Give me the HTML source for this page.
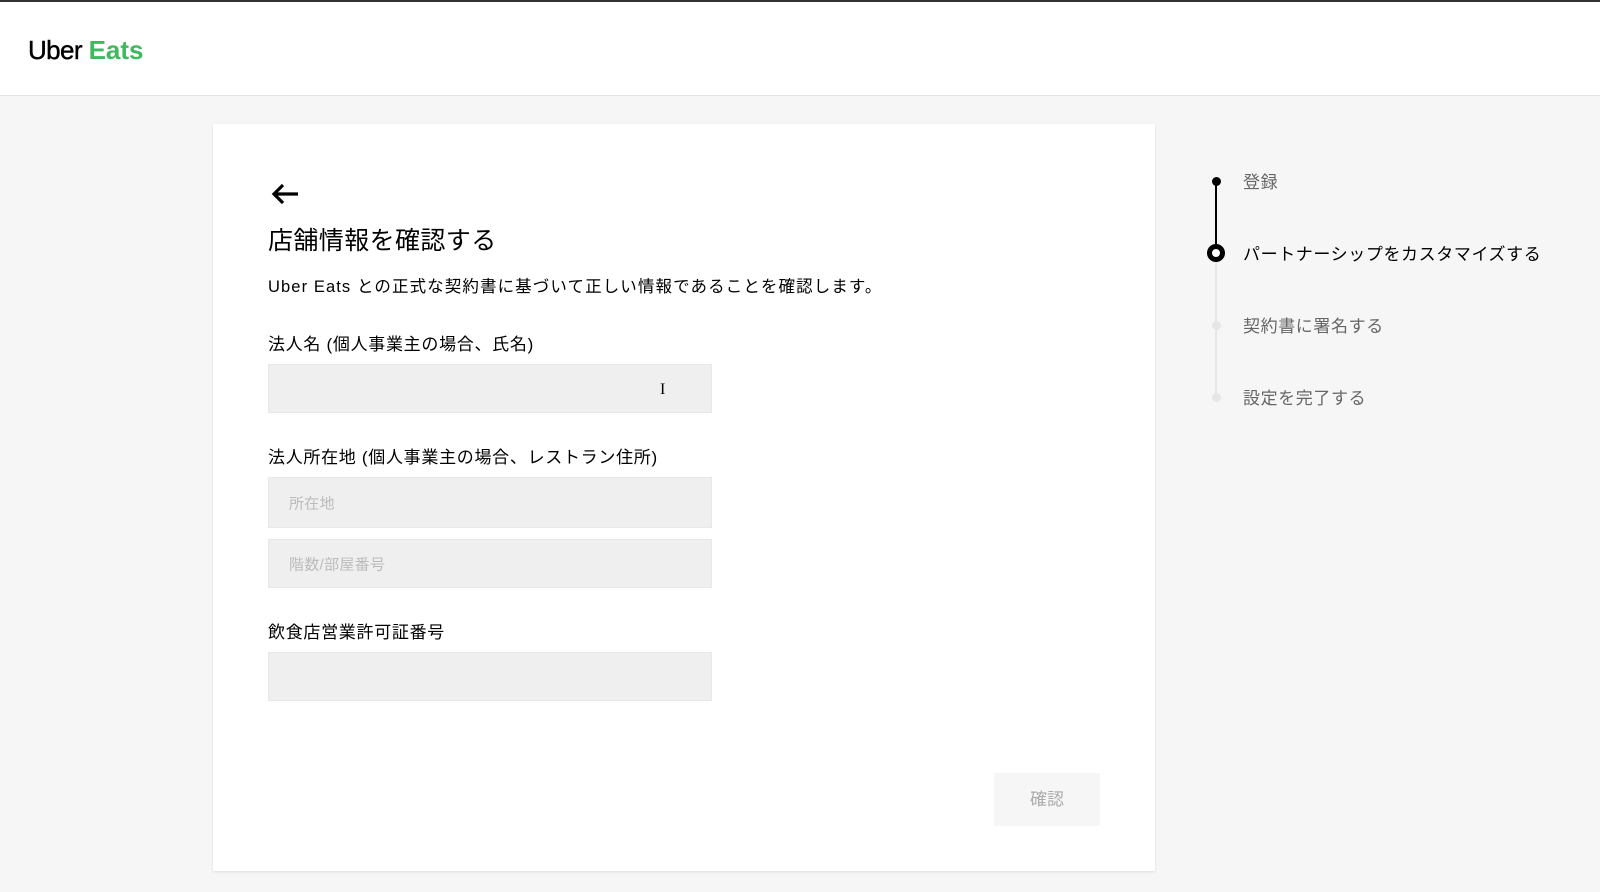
<!DOCTYPE html>
<html><head><meta charset="utf-8"><style>
*{margin:0;padding:0;box-sizing:border-box}
body{width:1600px;height:892px;background:#f6f6f6;font-family:"Liberation Sans","Noto Sans CJK JP",sans-serif;color:#000;position:relative;overflow:hidden}
.top{position:absolute;left:0;top:0;width:1600px;height:2px;background:#333}
.hdr{position:absolute;left:0;top:2px;width:1600px;height:94px;background:#fff;border-bottom:1px solid #e2e2e2}
.logo{position:absolute;left:28px;top:33px;font-size:26px;letter-spacing:-0.6px;-webkit-text-stroke:0.4px #000}
.logo b{color:#3fb860;font-weight:700;-webkit-text-stroke:0;letter-spacing:0}
.card{position:absolute;left:213px;top:124px;width:942px;height:747px;background:#fff;box-shadow:0 1px 3px rgba(0,0,0,.1)}
.a{position:absolute;font-size:17px;white-space:nowrap;letter-spacing:0.7px}
.inp{position:absolute;left:268px;width:444px;background:#efefef;border:1px solid #e8e8e8}
.ph{position:absolute;left:20px;top:50%;transform:translateY(-50%);font-size:15px;color:#bbb;letter-spacing:0.3px}
.btn{position:absolute;left:994px;top:773px;width:106px;height:53px;background:#f6f6f6;color:#aaa;font-size:17px;text-align:center;line-height:53px}
.dot{position:absolute;border-radius:50%}
.st{position:absolute;left:1243px;font-size:17px;color:#666;white-space:nowrap;letter-spacing:0.6px}
</style></head><body>
<div class="top"></div>
<div class="hdr"><div class="logo">Uber <b>Eats</b></div></div>
<div class="card"></div>
<svg style="position:absolute;left:270px;top:183px" width="30" height="22" viewBox="0 0 30 22"><path d="M28 11H5M13 2L4 11L13 20" fill="none" stroke="#000" stroke-width="3.2"/></svg>
<div class="a" style="left:268px;top:221px;font-size:25px;letter-spacing:0.4px">店舗情報を確認する</div>
<div class="a" style="left:268px;top:273px;font-size:16.5px;letter-spacing:1.1px">Uber Eats との正式な契約書に基づいて正しい情報であることを確認します。</div>
<div class="a" style="left:268px;top:330px">法人名 (個人事業主の場合、氏名)</div>
<div class="inp" style="top:364px;height:49px"></div>
<div class="a" style="left:660px;top:381px;font-size:16px;font-family:'Liberation Serif',serif">I</div>
<div class="a" style="left:268px;top:443px">法人所在地 (個人事業主の場合、レストラン住所)</div>
<div class="inp" style="top:477px;height:51px"><span class="ph">所在地</span></div>
<div class="inp" style="top:539px;height:49px"><span class="ph">階数/部屋番号</span></div>
<div class="a" style="left:268px;top:618px">飲食店営業許可証番号</div>
<div class="inp" style="top:652px;height:49px"></div>
<div class="btn">確認</div>
<div style="position:absolute;left:1215px;top:181px;width:2px;height:72px;background:#000"></div>
<div style="position:absolute;left:1215px;top:253px;width:2px;height:144px;background:#e6e6e6"></div>
<div class="dot" style="left:1212px;top:177px;width:9px;height:9px;background:#000"></div>
<div class="dot" style="left:1207px;top:244px;width:18px;height:18px;background:#fff;border:5px solid #000"></div>
<div class="dot" style="left:1212px;top:321px;width:9px;height:9px;background:#e6e6e6"></div>
<div class="dot" style="left:1212px;top:393px;width:9px;height:9px;background:#e6e6e6"></div>
<div class="st" style="top:168px">登録</div>
<div class="st" style="top:240px;color:#000">パートナーシップをカスタマイズする</div>
<div class="st" style="top:312px">契約書に署名する</div>
<div class="st" style="top:384px">設定を完了する</div>
</body></html>
